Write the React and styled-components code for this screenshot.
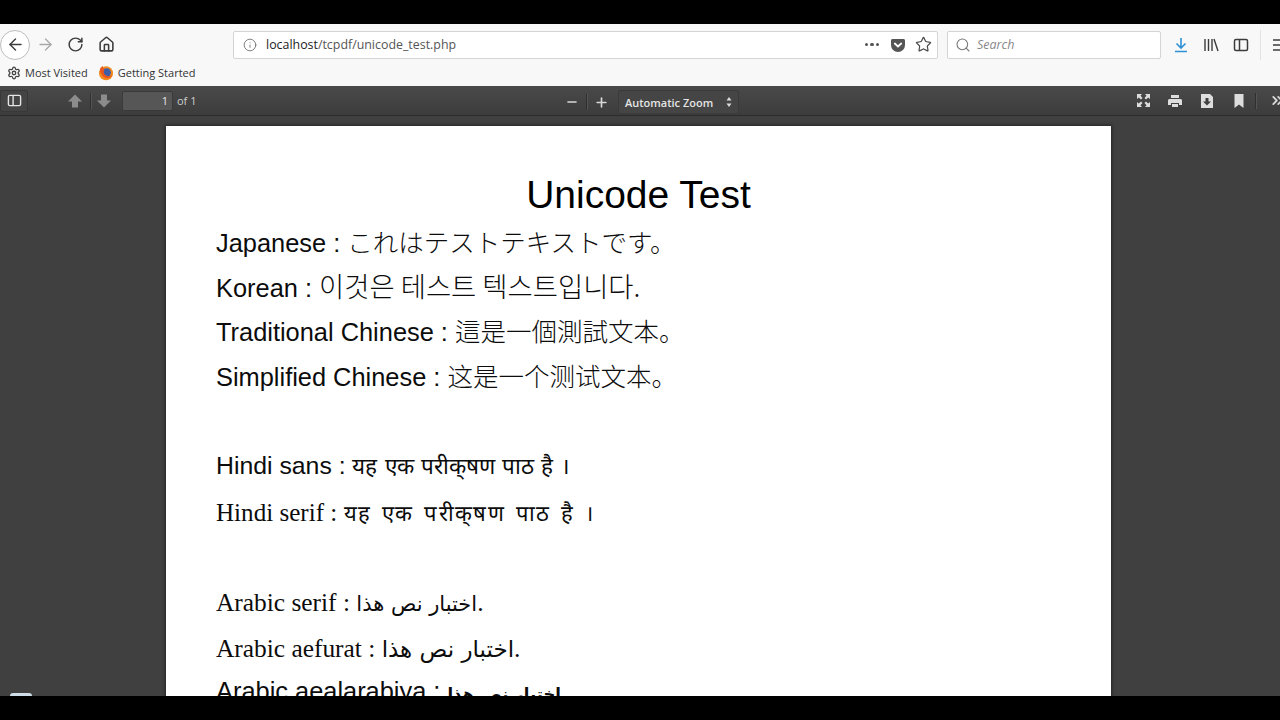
import React from "react";
import styled, { createGlobalStyle } from "styled-components";
import {
  ArrowLeft,
  ArrowRight,
  RotateCw,
  Home,
  Info,
  Star,
  Search,
  Settings,
  Minus,
  Plus,
  ChevronsRight,
} from "lucide-react";

const GlobalStyle = createGlobalStyle`
  html, body {
    margin: 0;
    padding: 0;
    background: #000;
    overflow: hidden;
  }
  * { box-sizing: border-box; }
`;

const Screen = styled.div`
  width: 1280px;
  height: 720px;
  padding: 24px 0;
  display: flex;
  flex-direction: column;
  background: #000;
  font-family: "Open Sans", "Noto Sans", sans-serif;
`;

const Chrome = styled.div`
  height: 62px;
  flex: none;
  background: #f8f8f8;
  display: flex;
  flex-direction: column;
`;

const NavRow = styled.div`
  height: 41px;
  flex: none;
  display: flex;
  align-items: center;
  overflow: hidden;
`;

const BackButton = styled.div`
  width: 30px;
  height: 30px;
  flex: none;
  border-radius: 50%;
  background: #fff;
  border: 1px solid #bdbdbd;
  display: flex;
  align-items: center;
  justify-content: center;
  color: #3c3c3c;
`;

const NavIcon = styled.div`
  width: ${(p) => p.$w || 31}px;
  height: 30px;
  flex: none;
  display: flex;
  align-items: center;
  justify-content: center;
  color: ${(p) => p.$color || "#3c3c3c"};
`;

const UrlBar = styled.div`
  width: 705px;
  height: 28px;
  flex: none;
  margin-left: 111px;
  background: #fff;
  border: 1px solid #d4d4d4;
  border-radius: 2px;
  display: flex;
  align-items: center;
  padding: 0 5px 0 9px;
  color: #4a4a4a;
`;

const UrlText = styled.div`
  margin-left: 9px;
  flex: 1;
  font-size: 12.4px;
  color: #555;
  b {
    font-weight: 400;
    color: #222;
  }
`;

const Dots = styled.div`
  display: flex;
  gap: 2px;
  margin-right: 11px;
  span {
    width: 3.5px;
    height: 3.5px;
    border-radius: 50%;
    background: #555;
  }
`;

const UrlStar = styled(Star)`
  margin-left: 9px;
`;

const SearchBar = styled.div`
  width: 214px;
  height: 28px;
  flex: none;
  margin-left: 9px;
  margin-right: 5px;
  background: #fff;
  border: 1px solid #d4d4d4;
  border-radius: 2px;
  display: flex;
  align-items: center;
  gap: 6px;
  padding-left: 7px;
  color: #888;
  font-size: 12.5px;
  font-style: italic;
`;

const Separator = styled.div`
  width: 1px;
  height: 30px;
  flex: none;
  background: #e2e2e2;
  margin: 0 11px 0 4px;
`;

const BurgerSlot = styled.div`
  flex: none;
  display: flex;
`;

const BookmarkRow = styled.div`
  height: 21px;
  display: flex;
  align-items: flex-start;
  padding-left: 7px;
  font-size: 11px;
  line-height: 16px;
  color: #333;
`;

const Bookmark = styled.div`
  display: flex;
  align-items: center;
  gap: 4px;
  margin-right: 10px;
`;

const PdfToolbar = styled.div`
  height: 30px;
  flex: none;
  position: relative;
  overflow: hidden;
  display: flex;
  align-items: center;
  justify-content: space-between;
  background: linear-gradient(#4a4a4a, #3c3c3c);
  border-bottom: 1px solid #2c2c2c;
  color: #ddd;
`;

const ToolGroup = styled.div`
  display: flex;
  align-items: center;
`;

const ToolIcon = styled.div`
  width: ${(p) => p.$w || 30}px;
  height: 22px;
  flex: none;
  display: flex;
  align-items: center;
  justify-content: center;
  color: #d8d8d8;
`;

const SidebarToggle = styled(ToolIcon)`
  width: 28px;
  margin-right: 32px;
  background: #444;
  border: 1px solid #383838;
  border-radius: 2px;
`;

const ChevronSlot = styled(ToolIcon)`
  margin-left: 9px;
  margin-right: -10px;
`;

const ToolDivider = styled.div`
  width: 1px;
  height: 16px;
  flex: none;
  background: #2f2f2f;
  box-shadow: 1px 0 0 #555;
`;

const PageInput = styled.div`
  width: 51px;
  height: 20px;
  margin-left: 5px;
  background: #565656;
  border: 1px solid #3a3a3a;
  border-radius: 2px;
  color: #e6e6e6;
  font-size: 11px;
  line-height: 18px;
  text-align: right;
  padding-right: 4px;
`;

const PageCount = styled.span`
  margin-left: 4px;
  font-size: 11px;
  color: #cfcfcf;
`;

const CenterTools = styled.div`
  position: absolute;
  left: 557px;
  top: 4px;
  display: flex;
  align-items: center;
`;

const ZoomSelect = styled.div`
  width: 121px;
  height: 24px;
  margin-left: 3px;
  background: #454545;
  border: 1px solid #3b3b3b;
  border-radius: 2px;
  display: flex;
  align-items: center;
  justify-content: space-between;
  padding: 0 6px;
  font-size: 11px;
  font-weight: 600;
  color: #e4e4e4;
`;

const Viewer = styled.div`
  flex: 1;
  min-height: 0;
  overflow: hidden;
  background: #404040;
  padding-top: 10px;
  position: relative;
`;

const Sheet = styled.div`
  width: 945px;
  height: 600px;
  margin-left: 166px;
  background: #fff;
  padding: 47px 50px 0;
  color: #0c0c0c;
  box-shadow: 0 0 3px 1px rgba(20, 20, 20, 0.6);
`;

const Title = styled.h1`
  margin: 0 0 1px;
  height: 45px;
  text-align: center;
  color: #000;
  font: 400 39px/43px "Liberation Sans", Arial, sans-serif;
`;

// row heights differ a little, the PDF places each line on its own
const Line = styled.div`
  height: ${(p) => p.$h || 44.8}px;
  line-height: ${(p) => (p.$serif ? 48.8 : 44.8)}px;
  font-size: ${(p) => p.$size || 25.4}px;
  white-space: nowrap;
  font-family: ${(p) =>
    p.$serif
      ? '"Liberation Serif", "Noto Sans CJK JP", "DejaVu Serif", serif'
      : '"Liberation Sans", "Noto Sans CJK JP", "DejaVu Sans", sans-serif'};
`;

const BlankLine = styled.div`
  height: ${(p) => p.$h}px;
`;

const Cjk = styled.span`
  font-weight: 300;
  font-size: ${(p) => p.$size || 25.5}px;
  font-family: ${(p) => p.$font}, sans-serif;
`;

const Hindi = styled.span`
  font-size: ${(p) => (p.$serif ? 22 : 22.5)}px;
  letter-spacing: ${(p) => (p.$serif ? 1.3 : 0)}px;
  word-spacing: ${(p) => (p.$serif ? 4 : 1)}px;
`;

const Rtl = styled.span`
  font-family: "DejaVu Sans", sans-serif;
  font-size: ${(p) => p.$size}px;
  font-weight: ${(p) => (p.$bold ? 700 : 400)};
  unicode-bidi: isolate;
`;

const Corner = styled.div`
  position: absolute;
  left: 10px;
  bottom: 0;
  width: 22px;
  height: 3px;
  border-radius: 11px 11px 0 0;
  background: #cfdde8;
`;

const Logo = () => (
  <svg width="16" height="16" viewBox="0 0 16 16">
    <circle cx="8" cy="8.2" r="7" fill="#f28a1e" />
    <circle cx="8.6" cy="7.6" r="4.3" fill="#3c5fa8" />
    <path d="M2 5c1 5 4 9 9 8 2-.5 3-2 3.600-4-1 2-3.600 3-5.600 2S5 8 6 6 4 3 5 1C3 2 2 3 2 5z" fill="#e9561f" />
  </svg>
);

const LibraryIcon = () => (
  <svg width="16" height="16" viewBox="0 0 16 16" fill="none" stroke="#3c3c3c" strokeWidth="1.4">
    <path d="M2 2v12M5.500 2v12M9 2v12M11 2l4 12" />
  </svg>
);

const SidebarIcon = ({ color = "#3c3c3c", size = 16 }) => (
  <svg width={size} height={size} viewBox="0 0 16 16" fill="none" stroke={color} strokeWidth="1.5">
    <rect x="1.500" y="2.500" width="13" height="11" rx="1.500" />
    <path d="M6.500 2.500v11" />
  </svg>
);

const Pocket = () => (
  <svg width="16" height="16" viewBox="0 0 16 16">
    <path d="M1 3.500C1 2.700 1.700 2 2.500 2h11c.8 0 1.500.7 1.500 1.500V8a7 7 0 0 1-14 0z" fill="#555" />
    <path d="M4.800 6.500 8 9.500l3.200-3" fill="none" stroke="#fff" strokeWidth="1.800" strokeLinecap="round" />
  </svg>
);

const Burger = () => (
  <svg width="16" height="16" viewBox="0 0 16 16" stroke="#3c3c3c" strokeWidth="1.500">
    <path d="M1 3h14M1 8h14M1 13h14" />
  </svg>
);

const Download = () => (
  <svg width="16" height="16" viewBox="0 0 16 16" fill="none" stroke="#2e90d5" strokeWidth="1.600">
    <path d="M8 1v9.500M3.500 6.500 8 11l4.500-4.500M2 14.500h12" />
  </svg>
);

const ThickArrow = ({ down }) => (
  <svg width="16" height="16" viewBox="0 0 16 16" fill="#8c8c8c">
    <path d={down ? "M8 14.500 15 7.500h-4v-6H5v6H1z" : "M8 1.500 15 8.500h-4v6H5v-6H1z"} />
  </svg>
);

const Fullscreen = () => (
  <svg width="15" height="15" viewBox="0 0 15 15" fill="#ddd">
    <path d="M1 1h5L4.500 2.800 6.500 5 5 6.500 2.800 4.500 1 6zM14 1v5l-1.800-1.500L10 6.500 8.500 5l2-2.200L9 1zM1 14V9l1.800 1.500L5 8.500 6.500 10l-2 2.200L6 14zM14 14H9l1.500-1.800L8.500 10 10 8.500l2.200 2L14 9z" />
  </svg>
);

const Printer = () => (
  <svg width="16" height="16" viewBox="0 0 16 16" fill="#ddd">
    <path d="M4 2h8v3H4zM2.500 6h11c.8 0 1.500.7 1.500 1.500V12h-3v-2H4v2H1V7.500C1 6.700 1.700 6 2.500 6zM5 11h6v3H5z" />
  </svg>
);

const SaveDoc = () => (
  <svg width="14" height="16" viewBox="0 0 14 16">
    <path d="M1 1h9l3 3v11H1z" fill="#ddd" />
    <path d="M5.500 5h3v3.500H11L7 12.500 3 8.500h2.500z" fill="#3e3e3e" />
  </svg>
);

const BookmarkIcon = () => (
  <svg width="12" height="16" viewBox="0 0 12 16" fill="#ddd">
    <path d="M1.500 1h9v14L6 11.500 1.500 15z" />
  </svg>
);

const SelectArrows = () => (
  <svg width="6" height="10" viewBox="0 0 6 10" fill="#ddd">
    <path d="M3 0l2.500 3.500h-5zM3 10 .5 6.500h5z" />
  </svg>
);

const lines = [
  { label: "Japanese : ", text: "これはテストテキストです。", font: '"Noto Sans CJK JP"', h: 44 },
  { label: "Korean : ", text: "이것은 테스트 텍스트입니다.", font: '"Noto Sans CJK KR"', size: 27.4, h: 44.8 },
  { label: "Traditional Chinese : ", text: "這是一個測試文本。", font: '"Noto Sans CJK JP"', h: 45.6 },
  { label: "Simplified Chinese : ", text: "这是一个测试文本。", font: '"Noto Sans CJK SC"', h: 44.8 },
];

const App = () => {
  return (
    <Screen>
      <GlobalStyle />
      <Chrome>
        <NavRow>
          <BackButton>
            <ArrowLeft size={19} strokeWidth={1.8} />
          </BackButton>
          <NavIcon $w={30} $color="#a8a8a8">
            <ArrowRight size={19} strokeWidth={1.6} />
          </NavIcon>
          <NavIcon>
            <RotateCw size={17} strokeWidth={2.1} />
          </NavIcon>
          <NavIcon>
            <Home size={17} strokeWidth={2.2} />
          </NavIcon>
          <UrlBar>
            <Info size={14} strokeWidth={1.4} color="#666" />
            <UrlText>
              <b>localhost</b>/tcpdf/unicode_test.php
            </UrlText>
            <Dots>
              <span />
              <span />
              <span />
            </Dots>
            <Pocket />
            <UrlStar size={17} strokeWidth={1.7} />
          </UrlBar>
          <SearchBar>
            <Search size={16} strokeWidth={1.6} color="#777" />
            Search
          </SearchBar>
          <NavIcon $w={30}>
            <Download />
          </NavIcon>
          <NavIcon $w={30}>
            <LibraryIcon />
          </NavIcon>
          <NavIcon $w={30}>
            <SidebarIcon />
          </NavIcon>
          <Separator />
          <BurgerSlot>
            <Burger />
          </BurgerSlot>
        </NavRow>
        <BookmarkRow>
          <Bookmark>
            <Settings size={14} strokeWidth={2.2} color="#444" />
            Most Visited
          </Bookmark>
          <Bookmark>
            <Logo />
            Getting Started
          </Bookmark>
        </BookmarkRow>
      </Chrome>
      <PdfToolbar>
        <ToolGroup>
          <SidebarToggle>
            <SidebarIcon color="#e4e4e4" size={15} />
          </SidebarToggle>
          <ToolIcon $w={30}>
            <ThickArrow />
          </ToolIcon>
          <ToolDivider />
          <ToolIcon $w={26}>
            <ThickArrow down />
          </ToolIcon>
          <PageInput>1</PageInput>
          <PageCount>of 1</PageCount>
        </ToolGroup>
        <CenterTools>
          <ToolIcon $w={29}>
            <Minus size={14} strokeWidth={2.6} />
          </ToolIcon>
          <ToolDivider />
          <ToolIcon $w={28}>
            <Plus size={15} strokeWidth={2.6} />
          </ToolIcon>
          <ZoomSelect>
            Automatic Zoom
            <SelectArrows />
          </ZoomSelect>
        </CenterTools>
        <ToolGroup>
          <ToolIcon $w={32}>
            <Fullscreen />
          </ToolIcon>
          <ToolIcon $w={32}>
            <Printer />
          </ToolIcon>
          <ToolIcon $w={32}>
            <SaveDoc />
          </ToolIcon>
          <ToolIcon $w={32}>
            <BookmarkIcon />
          </ToolIcon>
          <ToolDivider />
          <ChevronSlot $w={25}>
            <ChevronsRight size={17} strokeWidth={2.6} />
          </ChevronSlot>
        </ToolGroup>
      </PdfToolbar>
      <Viewer>
        <Sheet>
          <Title>Unicode Test</Title>
          {lines.map((l) => (
            <Line key={l.label} $h={l.h}>
              {l.label}
              <Cjk $font={l.font} $size={l.size}>
                {l.text}
              </Cjk>
            </Line>
          ))}
          <BlankLine $h={46} />
          <Line $size={24.8}>
            Hindi sans : <Hindi>यह एक परीक्‌षण पाठ है ।</Hindi>
          </Line>
          <Line $serif $size={25.1}>
            Hindi serif : <Hindi $serif>यह एक परीक्‌षण पाठ है ।</Hindi>
          </Line>
          <BlankLine $h={44} />
          <Line $serif $h={45.8}>
            Arabic serif : <Rtl $size={21}>اختبار نص هذا</Rtl>.
          </Line>
          <Line $serif $h={45.8}>
            Arabic aefurat : <Rtl $size={23}>اختبار نص هذا</Rtl>.
          </Line>
          <Line>
            Arabic aealarabiya : <Rtl $size={16.5} $bold>اختبار نص هذا</Rtl>
          </Line>
        </Sheet>
        <Corner />
      </Viewer>
    </Screen>
  );
};

export default App;
